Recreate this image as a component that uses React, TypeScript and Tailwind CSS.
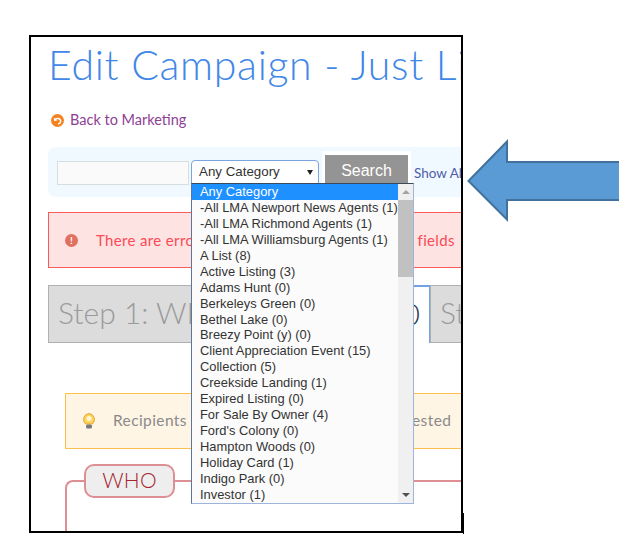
import React from "react";

const categories = [
  "Any Category",
  "-All LMA Newport News Agents (1)",
  "-All LMA Richmond Agents (1)",
  "-All LMA Williamsburg Agents (1)",
  "A List (8)",
  "Active Listing (3)",
  "Adams Hunt (0)",
  "Berkeleys Green (0)",
  "Bethel Lake (0)",
  "Breezy Point (y) (0)",
  "Client Appreciation Event (15)",
  "Collection (5)",
  "Creekside Landing (1)",
  "Expired Listing (0)",
  "For Sale By Owner (4)",
  "Ford's Colony (0)",
  "Hampton Woods (0)",
  "Holiday Card (1)",
  "Indigo Park (0)",
  "Investor (1)",
];

const CategoryList = () => (
  <div className="absolute left-[160px] top-[146px] w-[223px] h-[321px] flex bg-[#fbfbfb] border border-[#9db4dc] border-t-[#3c4a5c] border-l-[#5f7598] font-['Liberation_Sans',sans-serif] text-[12.9px] leading-[15.95px] text-[#333]">
    <ul className="flex-1 min-w-0">
      {categories.map((category, index) => (
        <li key={category}
            className={`h-[15.95px] pl-[8px] whitespace-nowrap ${index === 0 ? "bg-[#1e90ff] text-white" : ""}`}>
          {category}
        </li>
      ))}
    </ul>
    <div className="w-[15px] flex flex-col items-center bg-[#f0f0f0]">
      <div className="h-[16px] flex items-center justify-center">
        <div className="w-0 h-0 border-x-[4px] border-x-transparent border-b-[4px] border-b-[#a3a3a3]"/>
      </div>
      <div className="w-full h-[77px] bg-[#c1c1c1]"/>
      <div className="flex-1"/>
      <div className="h-[16px] flex items-center justify-center">
        <div className="w-0 h-0 border-x-[4px] border-x-transparent border-t-[4px] border-t-[#505050]"/>
      </div>
    </div>
  </div>
);

const BlueArrow = () => (
  <svg className="absolute left-[465px] top-[138px]" width="154" height="86" viewBox="0 0 154 86">
    <path d="M3.5 43 L42 3.5 L42 24 L156 24 L156 62 L42 62 L42 81.5 Z" fill="#5b9bd5" stroke="#41719c" strokeWidth="2"/>
  </svg>
);

const App = () => {
  return (
    <div className="relative w-[619px] h-[551px] bg-white overflow-hidden pl-[29px] pt-[35px]">
      <div className="relative w-[434px] h-[498px] border-2 border-black overflow-hidden font-['Lato',sans-serif] bg-white">
        <h1 className="pl-[17px] pt-[3px] text-[41px] leading-[50px] tracking-[0.7px] font-light text-[#4087e8] whitespace-nowrap">
          Edit Campaign - Just Listed
        </h1>

        <div className="flex items-center gap-[6px] pl-[20px] mt-[20px] h-[20px]">
          <svg width="13" height="13" viewBox="0 0 13 13">
            <circle cx="6.5" cy="6.5" r="6.5" fill="#f58220"/>
            <path d="M4 6 C5 3.6 9.4 4 9.6 7 C9.7 8.6 8.4 9.8 7 9.8" fill="none" stroke="#fff" strokeWidth="1.5"/>
            <path d="M2.8 3.6 L3.2 7 L6.4 6.4 Z" fill="#fff"/>
          </svg>
          <a className="text-[14.5px] text-[#8e3f94]">Back to Marketing</a>
        </div>

        <div className="flex items-start w-[460px] h-[50px] mt-[17px] ml-[17px] rounded-l-lg bg-[#f0f9ff] pl-[9px] pt-[4px]">
          <div className="w-[132px] h-[24px] mt-[10px] border border-[#d8dde0] bg-[#fafafa]"/>
          <div className="flex items-center justify-between w-[128px] h-[24px] mt-[9px] ml-[2px] pl-[7px] pr-[5px] border border-[#7aa5e0] rounded-t-sm bg-white font-['Liberation_Sans',sans-serif] text-[13.33px] text-[#333]">
            Any Category
            <div className="w-0 h-0 border-x-[3px] border-x-transparent border-t-[5px] border-t-[#222]"/>
          </div>
          <div className="ml-[3px] h-[46px] bg-white px-[3px] pt-[4px]">
            <button className="block w-[83px] h-[32px] bg-[#949494] text-white text-center font-['Liberation_Sans',sans-serif] text-[16px]">
              Search
            </button>
          </div>
          <a className="ml-[3px] mt-[12px] text-[13.5px] text-[#4f5cab] whitespace-nowrap">Show All</a>
        </div>

        <div className="flex items-center w-[460px] h-[56px] mt-[15px] ml-[17px] border border-[#fb5a5a] bg-[#fee3e3] text-[#fb4a55] text-[15px] whitespace-nowrap">
          <div className="ml-[16px] w-[13px] h-[13px] rounded-full bg-[#e0705f] text-white text-[10px] leading-[13px] font-bold text-center">!</div>
          <span className="ml-[18px] tracking-[0.35px]">There are errors in all the highlighted required fields</span>
        </div>

        <div className="flex items-start w-[480px] mt-[17px] ml-[17px] text-[30px] leading-[52px] whitespace-nowrap">
          <div className="w-[250px] h-[58px] pl-[9px] border border-[#b0b0b0] bg-[#dcdcdc] text-[#9a9a9a] font-light">Step 1: WHO</div>
          <div className="w-[132px] h-[58px] pr-[9px] text-right border-t-2 border-x border-[#6ea3e8] border-b-0 bg-white text-[#1f3a55] font-light">WHAT 0</div>
          <div className="w-[90px] h-[58px] pl-[9px] border border-[#b0b0b0] bg-[#dcdcdc] text-[#9a9a9a] font-light">Step 3</div>
        </div>

        <div className="flex items-center w-[450px] h-[56px] mt-[50px] ml-[34px] border border-[#fbbf4d] bg-[#fef5e5] text-[#8a8a8a] text-[15.5px] whitespace-nowrap">
          <svg className="ml-[16px]" width="14" height="16" viewBox="0 0 14 16">
            <path d="M7 .5 A6 6 0 0 1 10.4 11 L3.6 11 A6 6 0 0 1 7 .5 Z" fill="#fbd45e" stroke="#e8a33a" strokeWidth="1"/>
            <circle cx="7" cy="5.5" r="2.5" fill="#fff6cf"/>
            <rect x="4" y="11.5" width="6" height="4" rx="1.5" fill="#77797b"/>
          </svg>
          <span className="ml-[17px] tracking-[0.4px]">Recipients who have not yet all been requested</span>
        </div>

        <div className="flex items-start w-[431px] mt-[15px] ml-[34px]">
          <div className="w-[19px] h-[60px] mt-[16px] border-l-2 border-t-2 border-[#dd8f94] rounded-tl-lg"/>
          <div className="w-[91px] h-[34px] rounded-[10px] border-2 border-[#dd8f94] bg-[#eeeeee] text-center text-[#a8242e] text-[21px] leading-[28px] tracking-[0.2px] font-light">
            WHO
          </div>
          <div className="flex-1 mt-[16px] border-t-2 border-[#dd8f94]"/>
        </div>

        <CategoryList/>
      </div>
      <div className="absolute left-[463px] top-[513px] w-[1px] h-[21px] bg-black"/>
      <BlueArrow/>
    </div>
  );
};

export default App;
